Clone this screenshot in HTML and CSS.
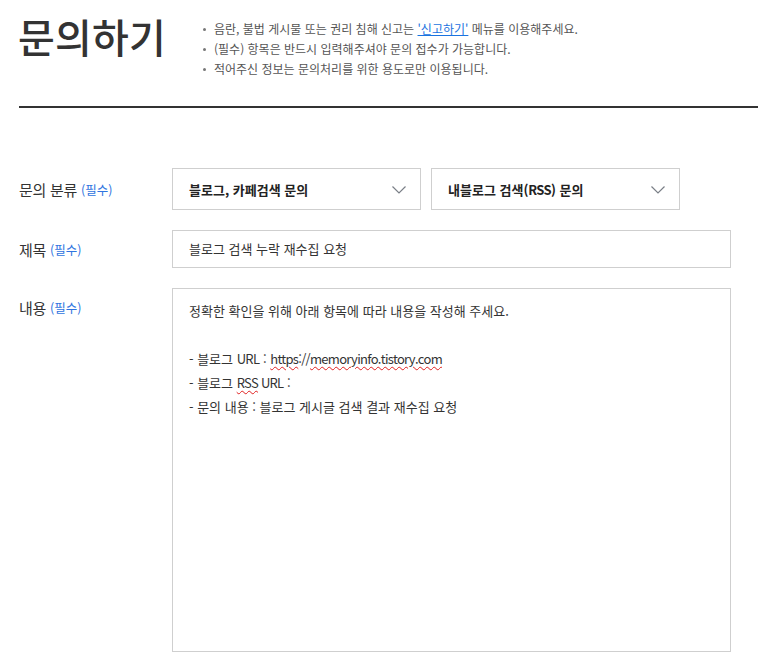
FILE: index.html
```html
<!DOCTYPE html>
<html lang="ko">
<head>
<meta charset="utf-8">
<title>문의하기</title>
<link rel="stylesheet" href="styles.css">
</head>
<body>
<div class="page">
  <header class="head">
    <h1 class="title">문의하기</h1>
    <ul class="notes">
      <li>음란, 불법 게시물 또는 권리 침해 신고는 <a class="link" href="#">'신고하기'</a> 메뉴를 이용해주세요.</li>
      <li>(필수) 항목은 반드시 입력해주셔야 문의 접수가 가능합니다.</li>
      <li>적어주신 정보는 문의처리를 위한 용도로만 이용됩니다.</li>
    </ul>
  </header>
  <div class="rule"></div>
  <div class="form">
    <div class="row row-select">
      <div class="label">문의 분류 <span class="req">(필수)</span></div>
      <div class="selects">
        <div class="select"><span>블로그, 카페검색 문의</span>
          <svg class="chev" width="14" height="8" viewBox="0 0 14 8"><polyline points="0.5,0.5 7,7 13.5,0.5" fill="none" stroke="#7a7f87" stroke-width="1.2"/></svg>
        </div>
        <div class="select"><span>내블로그 검색(<span class="lat">RSS</span>) 문의</span>
          <svg class="chev" width="14" height="8" viewBox="0 0 14 8"><polyline points="0.5,0.5 7,7 13.5,0.5" fill="none" stroke="#7a7f87" stroke-width="1.2"/></svg>
        </div>
      </div>
    </div>
    <div class="row row-input">
      <div class="label">제목 <span class="req">(필수)</span></div>
      <div class="input">블로그 검색 누락 재수집 요청</div>
    </div>
    <div class="row row-area">
      <div class="label">내용 <span class="req">(필수)</span></div>
      <div class="area">
        <p>정확한 확인을 위해 아래 항목에 따라 내용을 작성해 주세요.</p>
        <p>&nbsp;</p>
        <p>- 블로그 <span class="lat">URL</span> : <span class="lat"><span class="spell">https</span>://<span class="spell">memoryinfo.tistory.com</span></span></p>
        <p>- 블로그 <span class="lat"><span class="spell">RSS</span> URL</span> :</p>
        <p>- 문의 내용 : 블로그 게시글 검색 결과 재수집 요청</p>
      </div>
    </div>
  </div>
</div>
</body>
</html>
```

FILE: styles.css
```css
html, body {
  margin: 0;
  padding: 0;
  background: #fff;
}
body {
  font-family: "Noto Sans CJK KR", "Noto Sans", sans-serif;
  color: #333;
  width: 758px;
  overflow: hidden;
}
.page {
  padding-left: 19px;
}
.head {
  display: flex;
  align-items: flex-start;
  height: 106px;
}
.title {
  margin: 12px 0 0 -1px;
  font-size: 40px;
  line-height: 49px;
  font-weight: 500;
  letter-spacing: 0.2px;
  color: #333;
  width: 185px;
  flex: none;
}
.notes {
  list-style: none;
  margin: 19px 0 0 0;
  padding: 0;
  font-size: 12px;
  line-height: 20px;
  color: #555;
}
.notes li {
  position: relative;
  padding-left: 11px;
}
.notes li::before {
  content: "";
  position: absolute;
  left: 0;
  top: 9px;
  width: 3px;
  height: 3px;
  border-radius: 50%;
  background: #777;
}
.link {
  color: #1a73e0;
  text-decoration: underline;
}
.rule {
  height: 2px;
  background: #333;
}
.form {
  padding-top: 60px;
  display: flex;
  flex-direction: column;
  gap: 20px;
}
.row {
  display: flex;
  align-items: flex-start;
}
.label {
  width: 153px;
  flex: none;
  font-size: 15px;
  color: #333;
  letter-spacing: -0.3px;
  display: flex;
  align-items: center;
  gap: 4px;
  white-space: nowrap;
}
.req {
  font-size: 12.5px;
  color: #2f74e0;
  letter-spacing: 0;
}
.row-select .label { height: 42px; }
.row-input .label { height: 38px; }
.row-area .label { height: 24px; margin-top: 7px; }
.selects {
  display: flex;
  gap: 10px;
}
.select {
  box-sizing: border-box;
  width: 249px;
  height: 42px;
  border: 1px solid #cfcfcf;
  display: flex;
  align-items: center;
  justify-content: space-between;
  padding: 0 14px 0 16px;
  font-size: 13px;
  font-weight: 700;
  color: #222;
}
.chev {
  display: block;
  margin-top: 1px;
}
.input {
  box-sizing: border-box;
  width: 559px;
  height: 38px;
  border: 1px solid #cfcfcf;
  padding: 0 16px;
  font-size: 13px;
  line-height: 36px;
  color: #333;
}
.area {
  box-sizing: border-box;
  width: 559px;
  height: 364px;
  border: 1px solid #cfcfcf;
  padding: 10px 16px;
  font-size: 13px;
  line-height: 24px;
  color: #333;
}
.area p {
  margin: 0;
}
.lat {
  letter-spacing: -0.7px;
}
.spell {
  text-decoration: underline wavy #e02020;
  text-decoration-thickness: 1px;
  text-underline-offset: 2px;
}
```
